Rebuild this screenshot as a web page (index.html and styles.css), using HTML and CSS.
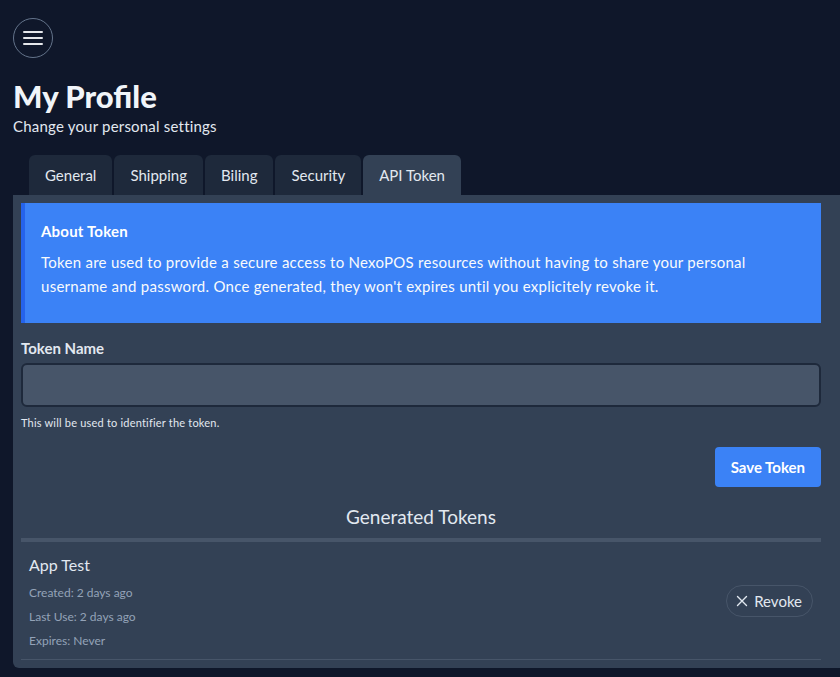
FILE: index.html
```html
<!DOCTYPE html>
<html>
<head>
<meta charset="utf-8">
<link rel="stylesheet" href="styles.css">
</head>
<body>
<div class="page">
  <div class="topbar">
    <button class="menu-btn" aria-label="menu">
      <svg width="20" height="16" viewBox="0 0 20 16"><path d="M1 2h18M1 8h18M1 14h18" stroke="#e5e7eb" stroke-width="2" stroke-linecap="round"/></svg>
    </button>
  </div>
  <div class="header">
    <h1 class="title">My Profile</h1>
    <p class="subtitle">Change your personal settings</p>
  </div>
  <div class="tabs">
    <div class="tab">General</div>
    <div class="tab">Shipping</div>
    <div class="tab">Biling</div>
    <div class="tab">Security</div>
    <div class="tab active">API Token</div>
  </div>
  <div class="card">
    <div class="info">
      <h3 class="info-title">About Token</h3>
      <p class="info-text">Token are used to provide a secure access to NexoPOS resources without having to share your personal username and password. Once generated, they won't expires until you explicitely revoke it.</p>
    </div>
    <div class="field">
      <label class="label">Token Name</label>
      <input class="input" type="text">
      <p class="help">This will be used to identifier the token.</p>
    </div>
    <div class="actions">
      <button class="save-btn">Save Token</button>
    </div>
    <h2 class="gen-title">Generated Tokens</h2>
    <div class="token-list">
      <div class="token">
        <div class="token-info">
          <div class="token-name">App Test</div>
          <div class="meta">Created: 2 days ago</div>
          <div class="meta">Last Use: 2 days ago</div>
          <div class="meta">Expires: Never</div>
        </div>
        <button class="revoke-btn">
          <svg class="x" width="12" height="12" viewBox="0 0 12 12"><path d="M1.5 1.5l9 9M10.5 1.5l-9 9" stroke="#e2e8f0" stroke-width="1.4" stroke-linecap="round"/></svg>
          Revoke
        </button>
      </div>
    </div>
  </div>
</div>
</body>
</html>
```
FILE: styles.css
```css
* { box-sizing: border-box; }
html, body { margin: 0; padding: 0; }
body {
  background: #0f172a;
  color: #e2e8f0;
  font-family: Lato, "Open Sans", sans-serif;
  overflow: hidden;
}
.page { padding: 18px 0 0 13px; }
.topbar { display: flex; }
.menu-btn {
  width: 40px; height: 40px;
  border-radius: 50%;
  border: 1px solid #64748b;
  background: transparent;
  display: flex; align-items: center; justify-content: center;
  padding: 0;
}
.header { margin-top: 20px; }
.title {
  margin: 0;
  font-size: 31px;
  font-weight: 900;
  color: #f1f5f9;
  line-height: 36px;
}
.subtitle {
  margin: 2px 0 0 0;
  font-size: 15px;
  line-height: 20px;
  color: #e2e8f0;
  letter-spacing: 0.2px;
}
.tabs {
  display: flex;
  gap: 2px;
  margin-top: 19px;
  padding-left: 16px;
}
.tab {
  height: 40px;
  padding: 0 16px;
  display: flex; align-items: center;
  background: #1e293b;
  border-radius: 6px 6px 0 0;
  font-size: 15px;
  color: #e2e8f0;
}
.tab.active { background: #334155; }
.card {
  background: #334155;
  padding: 8px 19px 8px 8px;
  border-radius: 0 0 0 6px;
  width: 827px;
}
.info {
  background: #3b82f6;
  border-left: 4px solid #2563eb;
  padding: 17px 16px 20px 16px;
  height: 120px;
}
.info-title {
  margin: 0;
  font-size: 15px;
  font-weight: 700;
  color: #fff;
  line-height: 22px;
  letter-spacing: 0.2px;
}
.info-text {
  margin: 8px 0 0 0;
  font-size: 15px;
  line-height: 24px;
  color: #f8fafc;
  letter-spacing: 0.27px;
}
.field { margin-top: 14px; }
.label {
  display: block;
  font-size: 15px;
  font-weight: 700;
  color: #e2e8f0;
  line-height: 22px;
}
.input {
  display: block;
  width: 100%;
  height: 44px;
  margin-top: 4px;
  background: #475569;
  border: 2px solid #1e293b;
  border-radius: 6px;
}
.help {
  margin: 8px 0 0 0;
  font-size: 11px;
  line-height: 16px;
  color: #e2e8f0;
  letter-spacing: 0.2px;
}
.actions {
  display: flex;
  justify-content: flex-end;
  margin-top: 16px;
}
.save-btn {
  height: 40px;
  padding: 0 16px;
  background: #3b82f6;
  color: #fff;
  border: none;
  border-radius: 4px;
  font-family: inherit;
  font-size: 15px;
  font-weight: 700;
}
.gen-title {
  margin: 16px 0 0 0;
  text-align: center;
  font-size: 19px;
  font-weight: 400;
  line-height: 28px;
  color: #e2e8f0;
}
.token-list {
  margin-top: 7px;
  border-top: 4px solid #475569;
}
.token {
  display: flex;
  align-items: center;
  justify-content: space-between;
  padding: 12px 8px 6px 8px;
  border-bottom: 1px solid #475569;
}
.token-name {
  font-size: 16px;
  line-height: 22px;
  color: #e2e8f0;
  margin-bottom: 5px;
}
.meta {
  font-size: 12px;
  line-height: 24px;
  color: #94a3b8;
}
.revoke-btn {
  display: flex; align-items: center; gap: 6px;
  height: 32px;
  margin-bottom: 6px;
  padding: 0 10px 0 9px;
  background: transparent;
  border: 1px solid #475569;
  border-radius: 16px;
  color: #e2e8f0;
  font-family: inherit;
  font-size: 15px;
}
```
